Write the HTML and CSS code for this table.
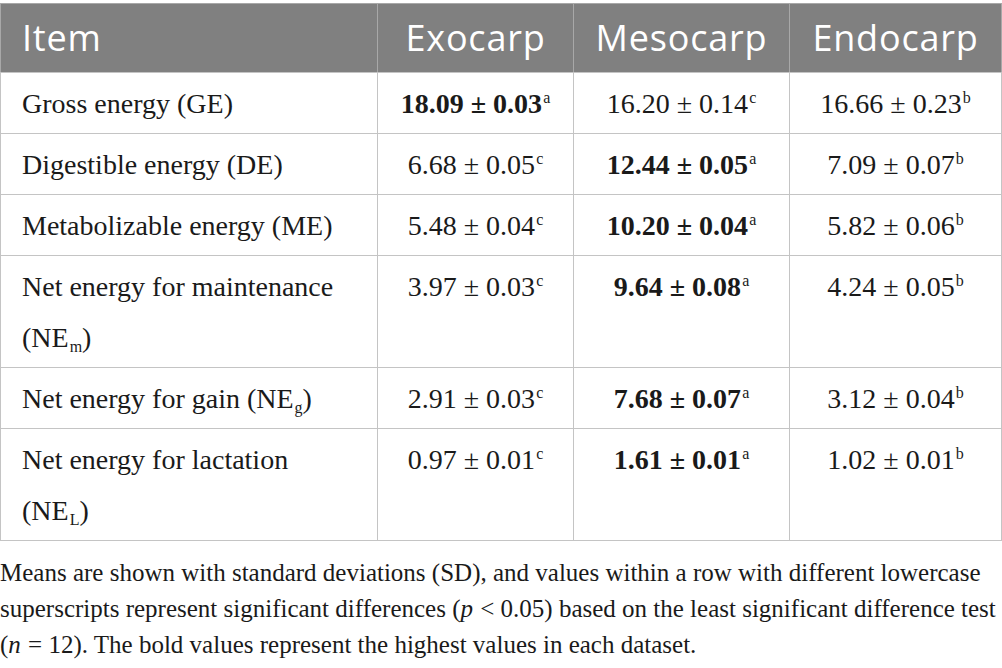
FILE: index.html
```html
<!DOCTYPE html>
<html lang="en">
<head>
<meta charset="utf-8">
<title>Energy values</title>
<link rel="stylesheet" href="styles.css">
</head>
<body>
<div class="wrap">
<table class="data">
  <colgroup>
    <col class="c-item">
    <col class="c-exo">
    <col class="c-meso">
    <col class="c-endo">
  </colgroup>
  <thead>
    <tr>
      <th class="left">Item</th>
      <th>Exocarp</th>
      <th>Mesocarp</th>
      <th>Endocarp</th>
    </tr>
  </thead>
  <tbody>
    <tr>
      <td class="left">Gross energy (GE)</td>
      <td><b>18.09 ± 0.03</b><sup>a</sup></td>
      <td>16.20 ± 0.14<sup>c</sup></td>
      <td>16.66 ± 0.23<sup>b</sup></td>
    </tr>
    <tr>
      <td class="left">Digestible energy (DE)</td>
      <td>6.68 ± 0.05<sup>c</sup></td>
      <td><b>12.44 ± 0.05</b><sup>a</sup></td>
      <td>7.09 ± 0.07<sup>b</sup></td>
    </tr>
    <tr>
      <td class="left">Metabolizable energy (ME)</td>
      <td>5.48 ± 0.04<sup>c</sup></td>
      <td><b>10.20 ± 0.04</b><sup>a</sup></td>
      <td>5.82 ± 0.06<sup>b</sup></td>
    </tr>
    <tr>
      <td class="left">Net energy for maintenance (NE<sub>m</sub>)</td>
      <td>3.97 ± 0.03<sup>c</sup></td>
      <td><b>9.64 ± 0.08</b><sup>a</sup></td>
      <td>4.24 ± 0.05<sup>b</sup></td>
    </tr>
    <tr>
      <td class="left">Net energy for gain (NE<sub>g</sub>)</td>
      <td>2.91 ± 0.03<sup>c</sup></td>
      <td><b>7.68 ± 0.07</b><sup>a</sup></td>
      <td>3.12 ± 0.04<sup>b</sup></td>
    </tr>
    <tr>
      <td class="left">Net energy for lactation (NE<sub>L</sub>)</td>
      <td>0.97 ± 0.01<sup>c</sup></td>
      <td><b>1.61 ± 0.01</b><sup>a</sup></td>
      <td>1.02 ± 0.01<sup>b</sup></td>
    </tr>
  </tbody>
</table>
<p class="note">Means are shown with standard deviations (SD), and values within a row with different lowercase superscripts represent significant differences (<i>p</i> &lt; 0.05) based on the least significant difference test (<i>n</i> = 12). The bold values represent the highest values in each dataset.</p>
</div>
</body>
</html>
```
FILE: styles.css
```css
html, body {
  margin: 0;
  padding: 0;
  background: #ffffff;
}

.wrap {
  width: 1002px;
  padding-top: 3px;
}

.data {
  border-collapse: collapse;
  width: 1001px;
  table-layout: fixed;
  font-family: "Liberation Serif", "Times New Roman", serif;
  font-size: 28px;
  color: #1a1a1a;
}

.c-item { width: 377px; }
.c-exo { width: 196px; }
.c-meso { width: 216px; }
.c-endo { width: 212px; }

.data th {
  background: #808080;
  color: #ffffff;
  font-family: "Open Sans", "Noto Sans", sans-serif;
  font-weight: 400;
  font-size: 36px;
  letter-spacing: 0.8px;
  height: 68px;
  padding: 0 8px;
  text-align: center;
  border: 1px solid #a8a8a8;
  border-bottom-color: #c4c4c4;
  line-height: 66px;
}

.data th.left {
  text-align: left;
  padding-left: 21px;
}

.data td {
  border: 1px solid #c4c4c4;
  padding: 5px 12px 4px 12px;
  line-height: 51px;
  text-align: center;
  vertical-align: top;
}

.data td.left {
  text-align: left;
  padding-left: 21px;
  padding-right: 30px;
}

.data b {
  font-weight: 700;
}

.data sup {
  font-size: 16px;
  line-height: 18px;
  vertical-align: 10px;
  margin-left: 1px;
}

.data sub {
  font-size: 16px;
  line-height: 18px;
  vertical-align: -5px;
  margin-left: 1px;
}

.note {
  margin: 14px 0 0 0;
  font-family: "Liberation Serif", "Times New Roman", serif;
  font-size: 25px;
  line-height: 36px;
  color: #1a1a1a;
  width: 1000px;
}

.note i {
  padding-right: 1px;
}
```
